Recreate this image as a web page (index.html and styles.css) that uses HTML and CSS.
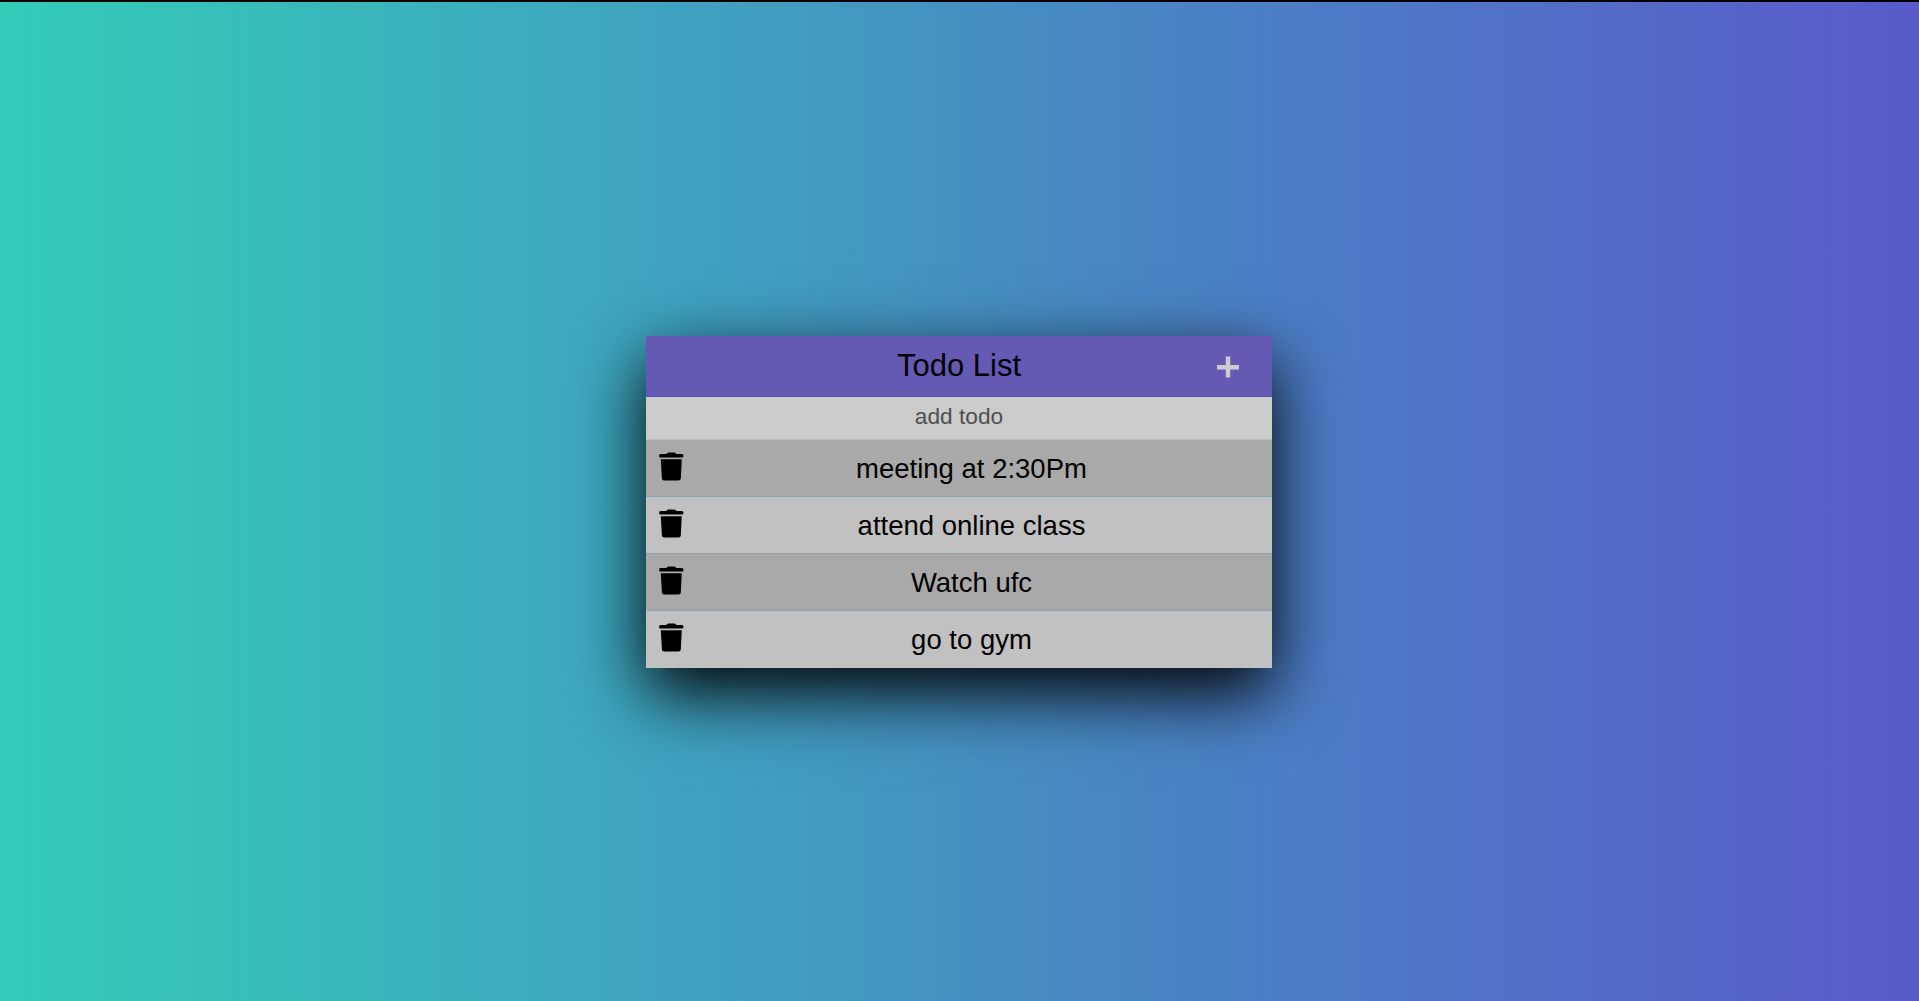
FILE: index.html
```html
<!DOCTYPE html>
<html lang="en">
<head>
<meta charset="utf-8">
<title>Todo List</title>
<link rel="stylesheet" href="styles.css">
</head>
<body>
<svg class="sprite" aria-hidden="true">
  <symbol id="trash" viewBox="0 0 25 29">
    <path d="M1.6 2.1H7.2Q8 .6 9.2 .6H15.4Q16.6 .6 17.4 2.1H23Q24.5 2.1 24.5 3.9Q24.5 5.6 23 5.6H1.6Q.1 5.6 .1 3.9Q.1 2.1 1.6 2.1ZM1.8 7.2H22.8L21.8 26.6Q21.6 28.5 19.6 28.5H5Q3.1 28.5 2.9 26.6Z"/>
  </symbol>
</svg>
<main class="todo">
  <header class="todo-header">
    <h1 class="todo-title">Todo List</h1>
    <button class="add" aria-label="Add"><svg class="add-icon" viewBox="0 0 22 22"><path d="M11 .5V21.5M0 11.2H22"/></svg></button>
  </header>
  <input class="todo-input" type="text" placeholder="add todo">
  <ul class="todo-items">
    <li class="item"><svg class="trash"><use href="#trash"/></svg><span class="label">meeting at 2:30Pm</span></li>
    <li class="item"><svg class="trash"><use href="#trash"/></svg><span class="label">attend online class</span></li>
    <li class="item"><svg class="trash"><use href="#trash"/></svg><span class="label">Watch ufc</span></li>
    <li class="item"><svg class="trash"><use href="#trash"/></svg><span class="label">go to gym</span></li>
  </ul>
</main>
</body>
</html>
```

FILE: styles.css
```css
* { box-sizing: border-box; }
body {
  margin: 0;
  height: 100vh;
  border-top: 2px solid #000;
  display: flex;
  justify-content: center;
  align-items: flex-start;
  padding-top: 334px;
  overflow: hidden;
  font-family: "Liberation Sans", Arial, sans-serif;
  color: #000;
  background: linear-gradient(to right, #32ccb7 0%, #409fc0 38%, #4985c4 60%, #5a5acb 100%);
}
.sprite { position: absolute; width: 0; height: 0; }
.todo {
  width: 626px;
  margin-right: 1px;
  box-shadow: 0 25px 65px #000;
}
.todo-header {
  display: grid;
  grid-template-columns: 88px 1fr 88px;
  align-items: center;
  height: 61px;
  background: #645ab4;
  border-bottom: 1px solid #5552b8;
}
.todo-title {
  grid-column: 2;
  margin: 0;
  font-size: 31px;
  font-weight: 400;
  line-height: 36px;
  text-align: center;
}
.add { border: 0; padding: 1px 0 0; background: none; display: flex; justify-content: center; }
.add-icon { width: 22px; height: 22px; fill: none; stroke: #ccc; stroke-width: 4.4; }
.todo-input {
  display: block;
  width: 100%;
  height: 43px;
  border: 0;
  border-bottom: 1px solid #b5c1c4;
  padding: 0 0 3px;
  background: #ccc;
  font: 22.7px "Liberation Sans", Arial, sans-serif;
  text-align: center;
}
.todo-input::placeholder { color: #505050; opacity: 1; }
.todo-items { margin: 0; padding: 0; list-style: none; }
.item {
  display: flex;
  height: 57px;
  padding: 0 13px 0 13px;
  background: #c1c1c1;
  border-bottom: 1px solid #86a5b5;
}
.item:nth-child(odd) { background: #a9a9a9; }
.item:last-child { border-bottom-color: #c1c1c1; }
.trash { width: 25px; height: 29px; margin-top: 12px; }
.label { flex: 1; font-size: 27.5px; line-height: 58px; text-align: center; }
```
